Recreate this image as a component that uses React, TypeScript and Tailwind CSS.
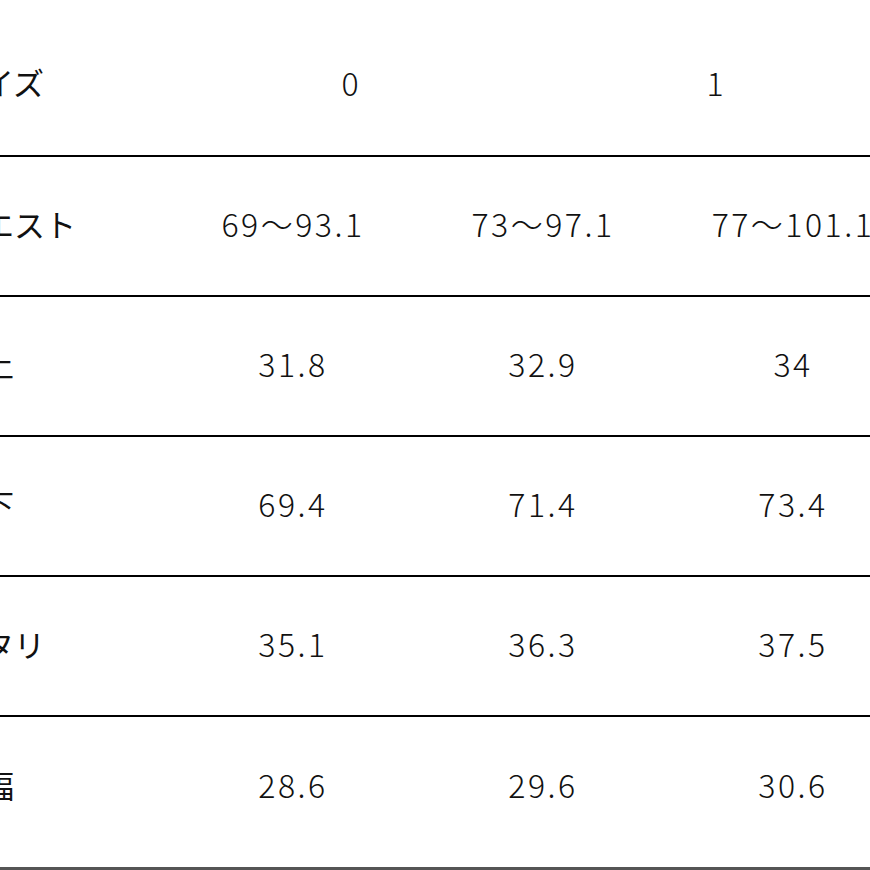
import React from "react";

const rows = [
  { label: "ウエスト", values: ["69〜93.1", "73〜97.1", "77〜101.1"] },
  { label: "股上", values: ["31.8", "32.9", "34"] },
  { label: "股下", values: ["69.4", "71.4", "73.4"] },
  { label: "ワタリ", values: ["35.1", "36.3", "37.5"] },
  { label: "裾幅", values: ["28.6", "29.6", "30.6"] },
];

export default function App() {
  return (
    <div
      className="w-[870px] h-[870px] overflow-hidden bg-white text-[#111] relative"
      style={{ fontFamily: '"Noto Sans CJK JP", "Noto Sans", sans-serif' }}
    >
      <div className="ml-[-48px] w-[1000px] leading-none">
        {/* header */}
        <div className="flex items-center h-[157px] pt-[8px] border-b-2 border-black">
          <div className="w-[216px] text-[31px]">サイズ</div>
          <div className="w-[364px] text-center text-[32px] font-light">0</div>
          <div className="w-[366px] text-center text-[32px] font-light">1</div>
        </div>
        {rows.map((r, i) => (
          <div
            key={r.label}
            className={
              i < rows.length - 1
                ? "flex items-center h-[140px] pb-[6px] border-b-2 border-black"
                : "flex items-center h-[140px] pb-[6px]"
            }
          >
            <div className="w-[216px] text-[31px]">{r.label}</div>
            {r.values.map((v) => (
              <div
                key={v}
                className="w-[250px] text-center text-[32px] font-light tracking-[2.5px]"
              >
                {v}
              </div>
            ))}
          </div>
        ))}
      </div>
      <div className="absolute left-0 right-0 top-[867px] h-[3px] bg-[#555]" />
    </div>
  );
}
